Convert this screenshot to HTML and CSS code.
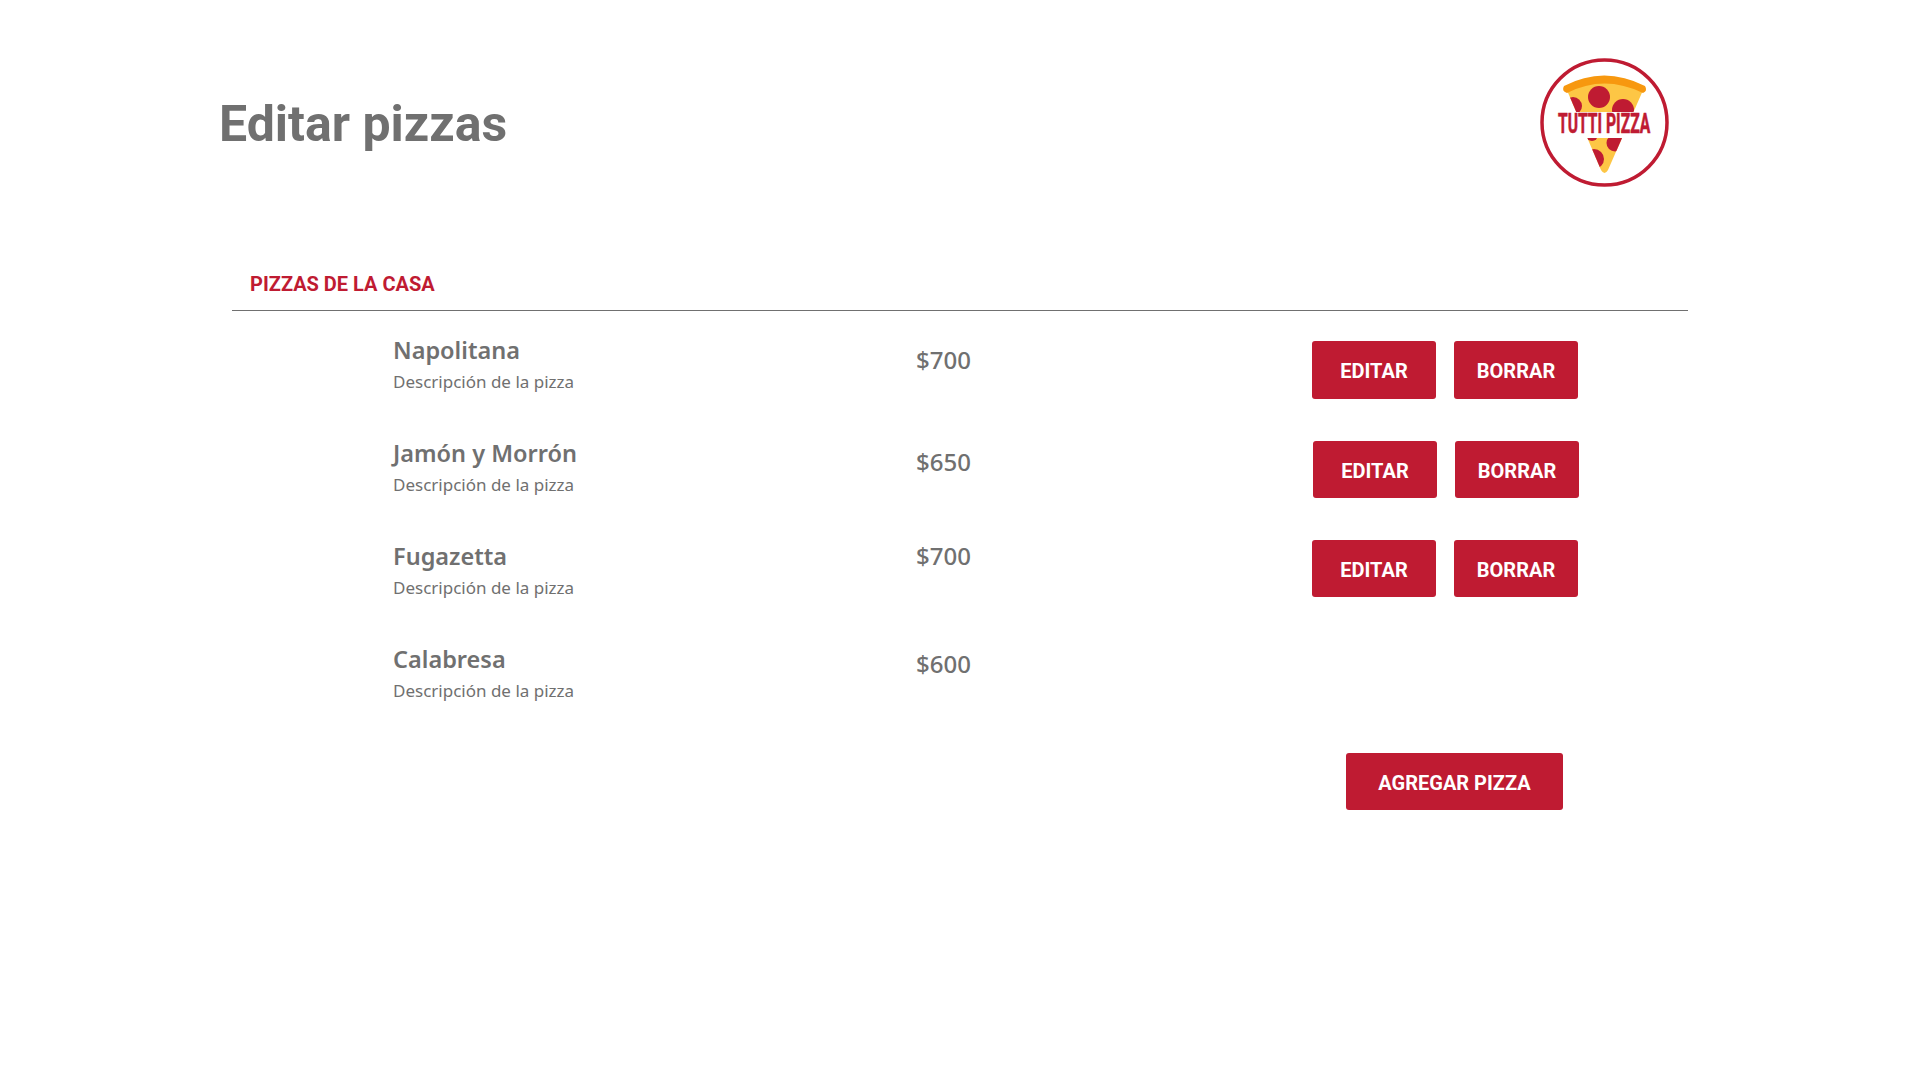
FILE: index.html
```html
<!DOCTYPE html>
<html lang="es">
<head>
<meta charset="utf-8">
<title>Editar pizzas</title>
<link rel="stylesheet" href="styles.css">
</head>
<body>
<main class="page">
  <header class="top">
    <h1 class="title">Editar pizzas</h1>
    <svg class="logo" viewBox="0 0 160 150" width="160" height="150" role="img" aria-label="Tutti Pizza">
      <circle cx="84.5" cy="72.5" r="62.5" fill="#fff" stroke="#bf1b32" stroke-width="3.5"/>
      <clipPath id="slice"><path d="M46 38 Q84 24 124 38 L88 120 Q84.5 126 81 120 Z"/></clipPath>
      <path d="M46 38 Q84 24 124 38 L88 120 Q84.5 126 81 120 Z" fill="#fdc645"/>
      <g clip-path="url(#slice)" fill="#bf1b32">
        <circle cx="79" cy="47" r="11"/>
        <circle cx="103" cy="60" r="11"/>
        <circle cx="53" cy="56" r="9"/>
        <circle cx="72" cy="85" r="6"/>
        <circle cx="95" cy="93" r="8.5"/>
        <circle cx="74" cy="109" r="10"/>
      </g>
      <path d="M44 36 Q84 15 125 36 Q128 41 123 43 Q84 24 47 43 Q41 41 44 36 Z" fill="#f7980f"/>
      <rect x="36" y="62" width="97" height="26" fill="#fff"/>
      <text class="logo-text" transform="translate(38 83) scale(.58 1)">TUTTI PIZZA</text>
    </svg>
  </header>

  <section class="menu">
    <h2 class="section-title">PIZZAS DE LA CASA</h2>
    <ul class="rows">
      <li class="row">
        <div class="info"><div class="name">Napolitana</div><div class="desc">Descripción de la pizza</div></div>
        <div class="price price-a">$700</div>
        <div class="actions actions-a"><button class="btn btn-sm">EDITAR</button><button class="btn btn-sm">BORRAR</button></div>
      </li>
      <li class="row">
        <div class="info"><div class="name">Jamón y Morrón</div><div class="desc">Descripción de la pizza</div></div>
        <div class="price price-b">$650</div>
        <div class="actions actions-b"><button class="btn btn-sm">EDITAR</button><button class="btn btn-sm">BORRAR</button></div>
      </li>
      <li class="row">
        <div class="info"><div class="name">Fugazetta</div><div class="desc">Descripción de la pizza</div></div>
        <div class="price price-c">$700</div>
        <div class="actions actions-c"><button class="btn btn-sm">EDITAR</button><button class="btn btn-sm">BORRAR</button></div>
      </li>
      <li class="row">
        <div class="info"><div class="name">Calabresa</div><div class="desc">Descripción de la pizza</div></div>
        <div class="price price-d">$600</div>
      </li>
    </ul>
    <div class="add"><button class="btn btn-lg">AGREGAR PIZZA</button></div>
  </section>
</main>
</body>
</html>
```
FILE: styles.css
```css
* { box-sizing: border-box; }
html, body { margin: 0; padding: 0; background: #fff; }
body { font-family: "Noto Sans", "Open Sans", sans-serif; color: #707070; }
.page { width: 1920px; height: 1080px; overflow: hidden; }
.top { display: flex; justify-content: space-between; align-items: flex-start; padding: 50px 240px 0 219px; height: 200px; }
.title { margin: 45px 0 0; font: 700 50px/1.17 Roboto, sans-serif; color: #707070; }
.logo { display: block; overflow: visible; }
.logo-text { font: 700 27px Roboto, sans-serif; fill: #bf1b32; stroke: #bf1b32; stroke-width: .6px; }
.menu { margin: 0 232px; width: 1456px; }
.section-title { margin: 0; padding: 72px 0 0 18px; height: 111px; border-bottom: 1px solid #707070; font: 700 20px/24px Roboto, sans-serif; color: #bf1b32; }
.rows { list-style: none; margin: 0; padding: 0; }
.row { display: flex; align-items: flex-start; height: 103px; padding-left: 161px; }
.info { width: 523px; padding-top: 23px; }
.name { font-size: 23.5px; line-height: 32px; font-weight: 600; }
.desc { font-size: 17px; line-height: 24px; margin-top: 4px; }
.price { width: 300px; font-size: 24px; line-height: 32px; font-weight: 500; }
.price-a { margin-top: 33px; }
.price-b { margin-top: 32px; }
.price-c { margin-top: 23px; }
.price-d { margin-top: 28px; }
.actions { display: flex; gap: 18px; margin-left: 96px; }
.actions .btn { height: 57px; }
.actions-a { margin-top: 30px; }
.actions-a .btn { height: 58px; }
.actions-b { margin-top: 27px; margin-left: 97px; }
.actions-c { margin-top: 23px; }
.btn { border: 0; border-radius: 3px; background: #bf1b32; color: #fff; font: 700 20px/24px Roboto, sans-serif; cursor: pointer; padding: 2px 0 0; }
.btn-sm { width: 124px; }
.btn-lg { width: 217px; height: 57px; }
.add { display: flex; justify-content: flex-end; padding-right: 125px; margin-top: 30px; }
```
